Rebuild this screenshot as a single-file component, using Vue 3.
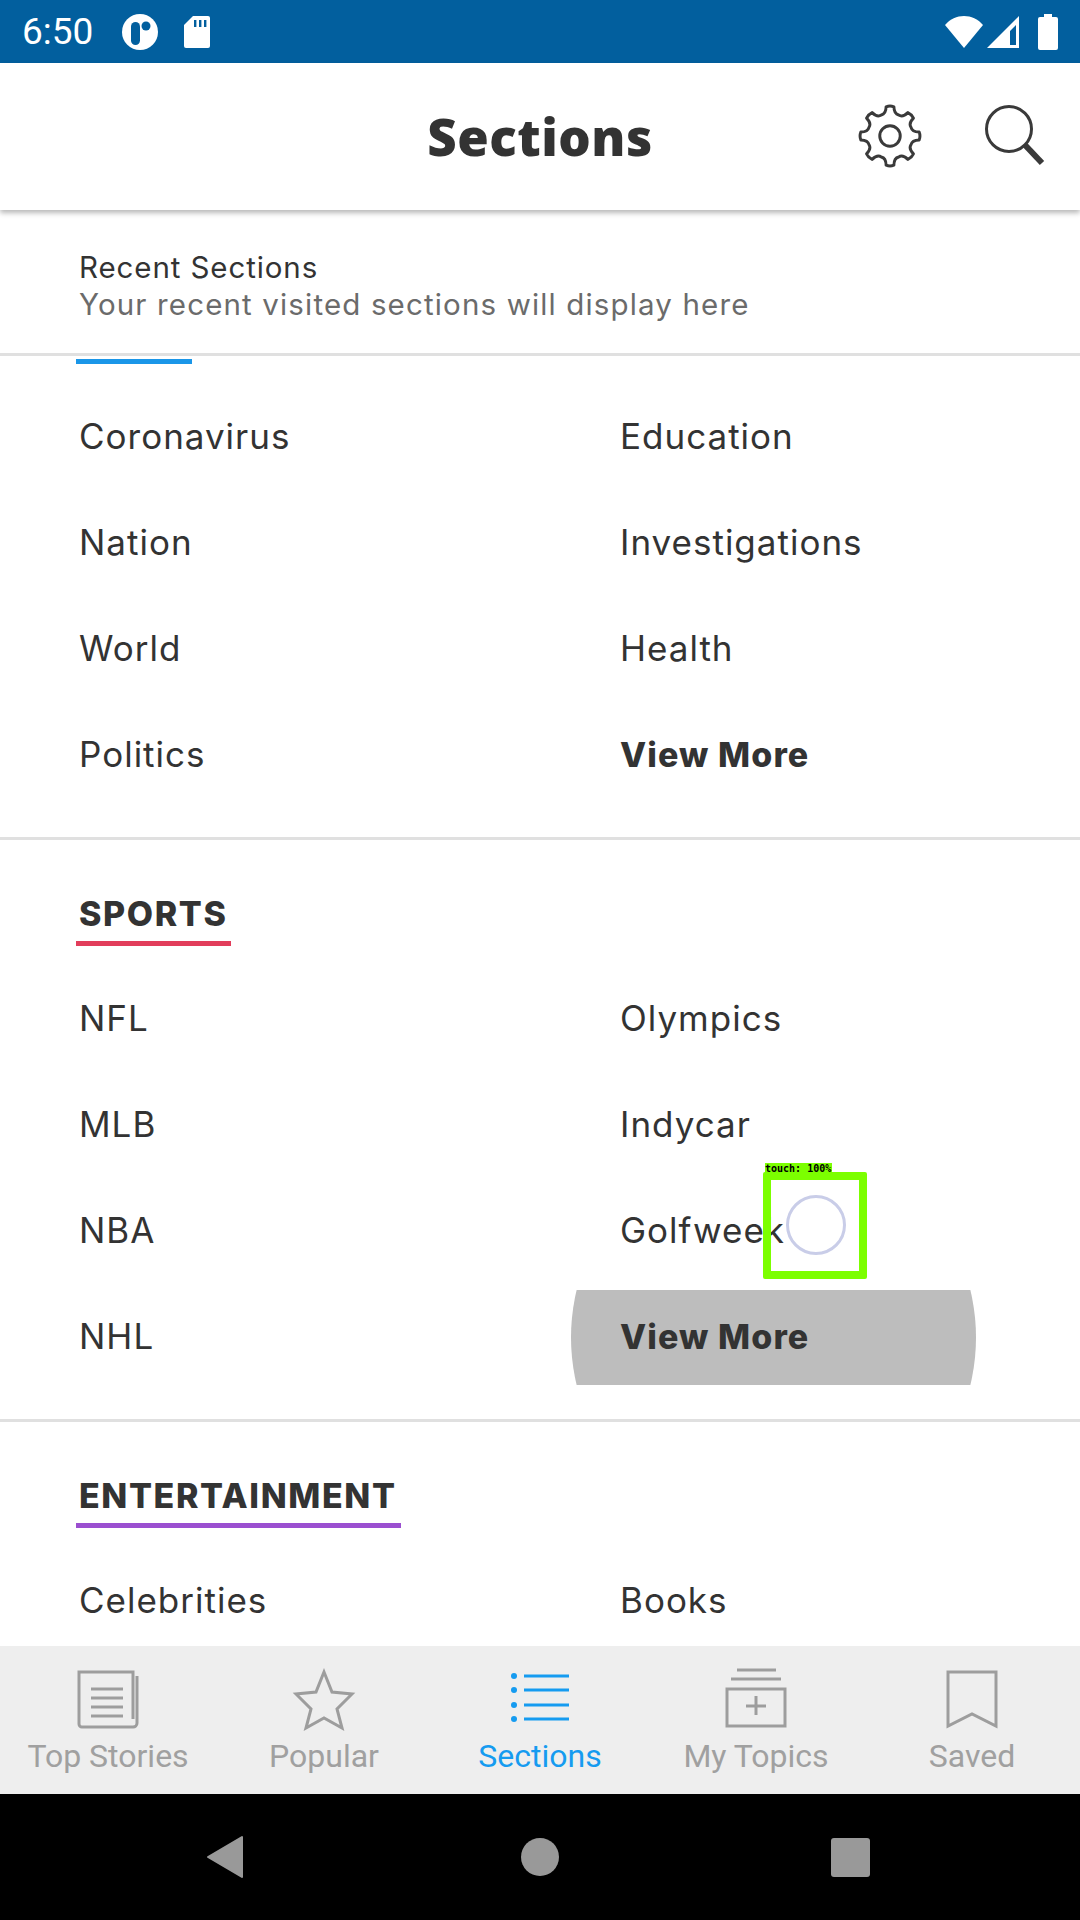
<script setup>
const gearPath = (() => {
  const cx = 50, cy = 50, teeth = 8
  const fmt = q => q[0].toFixed(1) + ' ' + q[1].toFixed(1)
  let d = ''
  for (let i = 0; i < teeth; i++) {
    const a = (i / teeth) * Math.PI * 2 - Math.PI / 2
    const st = Math.PI * 2 / teeth
    const p = (r, o) => [cx + r * Math.cos(a + o * st), cy + r * Math.sin(a + o * st)]
    d += (i === 0 ? 'M' : 'L') + fmt(p(46, -0.17))
    d += 'Q' + fmt(p(48, 0)) + ' ' + fmt(p(46, 0.17))
    d += 'C' + fmt(p(38, 0.21)) + ' ' + fmt(p(35, 0.32)) + ' ' + fmt(p(35.5, 0.5))
    d += 'C' + fmt(p(35, 0.68)) + ' ' + fmt(p(38, 0.79)) + ' ' + fmt(p(46, 0.83))
  }
  return d + 'Z'
})()

const sections = [
  { title: '', color: '#1a96e8', ruleWidth: 116, rows: [['Coronavirus', 'Education'], ['Nation', 'Investigations'], ['World', 'Health'], ['Politics', 'View More']] },
  { title: 'SPORTS', color: '#e23d5b', rows: [['NFL', 'Olympics'], ['MLB', 'Indycar'], ['NBA', 'Golfweek'], ['NHL', 'View More']], pressed: true },
  { title: 'ENTERTAINMENT', color: '#9b4fd0', rows: [['Celebrities', 'Books']] }
]
</script>

<template>
  <div class="screen">
    <div class="status">
      <span class="time">6:50</span>
      <svg class="st-r" width="38" height="38" viewBox="0 0 38 38">
        <circle cx="19" cy="19" r="18" fill="#fff"/>
        <rect x="10" y="9" width="9" height="23" rx="4.5" fill="#025f9e"/>
        <circle cx="25" cy="13" r="4.5" fill="#025f9e"/>
      </svg>
      <svg class="st-sd" width="28" height="34" viewBox="0 0 28 34">
        <path d="M10 1H25a2 2 0 0 1 2 2V31a2 2 0 0 1-2 2H3a2 2 0 0 1-2-2V10Z" fill="#fff"/>
        <path d="M11 5h2.4v7H11zM16 5h2.4v7H16zM21 5h2.4v7H21z" fill="#025f9e"/>
      </svg>
      <span class="spacer"></span>
      <svg width="40" height="34" viewBox="0 0 40 34">
        <path d="M1 10C6 4 13 1 20 1s14 3 19 9L20 33Z" fill="#fff"/>
      </svg>
      <svg class="st-sig" width="33" height="34" viewBox="0 0 33 34">
        <path fill-rule="evenodd" d="M32 1V33H0ZM29 10 23 16V30H29Z" fill="#fff"/>
      </svg>
      <svg class="st-bat" width="20" height="36" viewBox="0 0 20 36">
        <path d="M6 0H14V3H18a2 2 0 0 1 2 2V34a2 2 0 0 1-2 2H2a2 2 0 0 1-2-2V5a2 2 0 0 1 2-2H6Z" fill="#fff"/>
      </svg>
    </div>

    <header class="header">
      <h1 class="title">Sections</h1>
      <svg class="gear" width="64" height="64" viewBox="0 0 100 100">
        <path :d="gearPath" fill="none" stroke="#3a3a3a" stroke-width="4.6" stroke-linejoin="round"/>
        <circle cx="50" cy="50" r="16" fill="none" stroke="#3a3a3a" stroke-width="4.6"/>
      </svg>
      <svg class="search" width="64" height="64" viewBox="0 0 64 64">
        <circle cx="25" cy="25" r="22.5" fill="none" stroke="#3a3a3a" stroke-width="3"/>
        <path d="M41 41 58 59" stroke="#3a3a3a" stroke-width="6"/>
      </svg>
    </header>

    <main class="scroll">
      <div class="recent">
        <div class="recent-title">Recent Sections</div>
        <div class="recent-sub">Your recent visited sections will display here</div>
      </div>
      <section v-for="s in sections" :key="s.color" class="section">
        <div v-if="s.title" class="sec-head">
          <span class="sec-title" :style="{ borderBottomColor: s.color }">{{ s.title }}</span>
        </div>
        <div v-else class="sec-rule" :style="{ background: s.color, width: s.ruleWidth + 'px' }"></div>
        <div class="grid">
          <template v-for="(r, i) in s.rows" :key="i">
            <div class="cell">{{ r[0] }}</div>
            <div class="cell" :class="{ more: r[1] === 'View More' }">
              <span v-if="s.pressed && r[1] === 'View More'" class="ripple"><i></i></span>
              <span class="cell-text">{{ r[1] }}</span>
            </div>
          </template>
        </div>
      </section>
      <div class="touch">
        <span class="touch-label">touch: 100%</span>
        <span class="touch-dot"></span>
      </div>
    </main>

    <nav class="tabs">
      <div class="tab">
        <svg width="64" height="64" viewBox="0 0 64 64" fill="none" stroke="#9d9d9d" stroke-width="3">
          <path d="M61 8V55a4 4 0 0 1-4 4H6a3 3 0 0 1-3-3V4H57V51"/>
          <path d="M15 21H47M15 30H47M15 39H47M15 48H47"/>
        </svg>
        <span>Top Stories</span>
      </div>
      <div class="tab">
        <svg width="64" height="64" viewBox="0 0 64 64" fill="none" stroke="#9d9d9d" stroke-width="3">
          <path d="M32 4 40 24 60 26 45 41 50 60 32 50 14 60 19 41 4 26 24 24Z"/>
        </svg>
        <span>Popular</span>
      </div>
      <div class="tab active">
        <svg width="64" height="64" viewBox="0 0 64 64" fill="none" stroke="#159bf0" stroke-width="3">
          <path d="M16 8H61M16 22H61M16 37H61M16 51H61"/>
          <g fill="#159bf0" stroke="none">
            <circle cx="6" cy="8" r="3"/><circle cx="6" cy="22" r="3"/><circle cx="6" cy="37" r="3"/><circle cx="6" cy="51" r="3"/>
          </g>
        </svg>
        <span>Sections</span>
      </div>
      <div class="tab">
        <svg width="64" height="64" viewBox="0 0 64 64" fill="none" stroke="#9d9d9d" stroke-width="3">
          <path d="M13 2H52M7 11H57M3 21H61V58H3ZM32 28V47M22 38H42"/>
        </svg>
        <span>My Topics</span>
      </div>
      <div class="tab">
        <svg width="64" height="64" viewBox="0 0 64 64" fill="none" stroke="#9d9d9d" stroke-width="3">
          <path d="M8 4H56V58L32 46 8 58Z"/>
        </svg>
        <span>Saved</span>
      </div>
    </nav>

    <div class="sysnav">
      <svg width="38" height="44" viewBox="0 0 38 44"><path d="M36 2V42L2 22Z" fill="#999" stroke="#999" stroke-width="2" stroke-linejoin="round"/></svg>
      <span class="nav-circle"></span>
      <span class="nav-square"></span>
    </div>
  </div>
</template>

<style>
html, body { margin: 0; padding: 0; background: #fff; }
</style>

<style scoped>
.screen { width: 1080px; height: 1920px; display: flex; flex-direction: column; overflow: hidden; background: #fff; color: #333; font-family: Inter, "Liberation Sans", sans-serif; }
.status { height: 63px; flex: none; background: #025f9e; display: flex; align-items: center; padding: 0 22px 0 22px; box-sizing: border-box; color: #fff; }
.time { font: 400 37px Roboto, sans-serif; width: 99px; }
.st-sd { margin-left: 24px; }
.spacer { flex: 1; }
.st-sig { margin-left: 3px; }
.st-bat { margin-left: 18px; }
.header { height: 147px; flex: none; position: relative; display: flex; align-items: center; justify-content: flex-end; padding-right: 32px; box-sizing: border-box; background: #fff; box-shadow: 0 3px 5px rgba(0, 0, 0, .28); z-index: 2; }
.title { position: absolute; left: 0; right: 0; top: 43px; margin: 0; text-align: center; font: 800 51px/60px "Open Sans", sans-serif; letter-spacing: 0.5px; color: #333; }
.gear { margin-right: 62px; margin-top: -2px; }
.search { margin-top: -2px; }
.scroll { flex: 1; min-height: 0; overflow: hidden; position: relative; }
.recent { height: 146px; box-sizing: border-box; padding: 39px 0 0 79px; border-bottom: 3px solid #e0e0e0; }
.recent-title { font-size: 29.5px; line-height: 37px; letter-spacing: 0.9px; color: #333; }
.recent-sub { font-size: 29.5px; line-height: 37px; letter-spacing: 1.15px; color: #6b6b6b; }
.section { border-bottom: 3px solid #e0e0e0; padding-bottom: 30px; }
.sec-rule { height: 5px; margin: 3px 0 19px 76px; }
.sec-head { height: 106px; display: flex; align-items: flex-end; padding-left: 76px; margin-bottom: 19px; }
.sec-title { font-weight: 800; font-size: 34px; line-height: 40px; letter-spacing: 1.6px; padding: 0 4px 7px 3px; border-bottom: 5px solid; }
.grid { display: grid; grid-template-columns: 541px 1fr; padding-left: 79px; }
.cell { height: 106px; display: flex; align-items: center; font-size: 35px; letter-spacing: 1px; position: relative; color: #333; }
.more { font-size: 34px; font-weight: 800; letter-spacing: 1.1px; }
.cell-text { position: relative; }
.ripple { position: absolute; left: -49px; top: 7px; width: 405px; height: 95px; overflow: hidden; }
.ripple i { position: absolute; left: 0; top: -155px; width: 405px; height: 405px; border-radius: 50%; background: #bdbdbd; }
.touch { position: absolute; left: 763px; top: 962px; width: 104px; height: 107px; box-sizing: border-box; border: 8px solid #7cff00; border-radius: 2px; }
.touch-label { position: absolute; left: -6px; top: -17px; width: 67px; height: 11px; background: #7cff00; color: #000; font: 700 10px/11px "DejaVu Sans Mono", monospace; white-space: nowrap; }
.touch-dot { position: absolute; left: 15px; top: 15px; width: 60px; height: 60px; box-sizing: border-box; border: 3px solid #c9cde8; border-radius: 50%; filter: blur(0.6px); }
.tabs { height: 148px; flex: none; background: #eee; display: flex; box-sizing: border-box; z-index: 1; }
.tab { flex: 1; display: flex; flex-direction: column; align-items: center; padding-top: 22px; box-sizing: border-box; font: 400 32px/36px Roboto, sans-serif; color: #a0a0a0; }
.tab span { margin-top: 6px; }
.active { color: #159bf0; }
.sysnav { height: 126px; flex: none; background: #000; display: flex; align-items: center; padding-left: 206px; }
.nav-circle { width: 38px; height: 38px; border-radius: 50%; background: #999; margin-left: 277px; }
.nav-square { width: 39px; height: 39px; border-radius: 3px; background: #999; margin-left: 272px; }
</style>
